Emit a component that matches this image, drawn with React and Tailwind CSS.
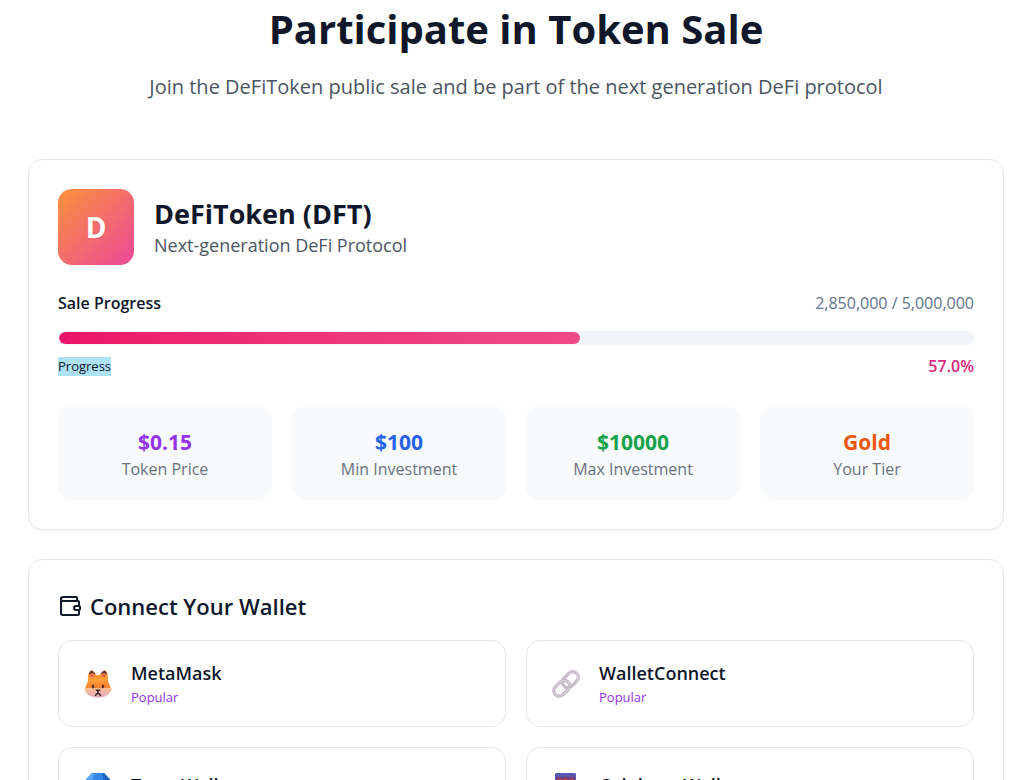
import { Wallet } from "lucide-react";

const stats = [
  { value: "$0.15", label: "Token Price", color: "text-[#9333ea]" },
  { value: "$100", label: "Min Investment", color: "text-[#2563eb]" },
  { value: "$10000", label: "Max Investment", color: "text-[#16a34a]" },
  { value: "Gold", label: "Your Tier", color: "text-[#ea580c]" },
];

const FoxIcon = () => (
  <svg viewBox="0 0 28 28" className="size-7" aria-hidden="true">
    <defs>
      <linearGradient id="fox" x1="0" y1="0" x2="0" y2="1">
        <stop offset="0" stopColor="#f98a35" />
        <stop offset=".5" stopColor="#ffa036" />
        <stop offset="1" stopColor="#f5792b" />
      </linearGradient>
      <linearGradient id="foxCheek" x1="0" y1="0" x2="0" y2="1">
        <stop offset="0" stopColor="#ffc08c" />
        <stop offset="1" stopColor="#dfa9c4" />
      </linearGradient>
    </defs>
    <path d="M4 11C3.500 5 5 1 7.500.5c2 0 3.500 2.500 4.500 4.500h4c1-2 2.500-4.500 4.500-4.500C23 1 24.500 5 24 11l3 7.500H1z" fill="url(#fox)" />
    <path d="M5 4.500C5.500 1.500 6.500.4 7.500.4 9 .6 10.500 2.400 11.500 4.500L8.500 3zM23 4.500C22.500 1.500 21.500.4 20.500.4 19 .6 17.500 2.400 16.500 4.500l3-1.500z" fill="#5b3b3d" />
    <path d="M6.500 7.500c0-2 .7-4 1.500-4s2 1.500 2.500 3zM21.500 7.500c0-2-.7-4-1.500-4s-2 1.500-2.500 3z" fill="#e8604c" />
    <path d="M.3 18c3-.5 8 0 11 1l2.700-1.500 2.700 1.500c3-1 8-1.500 11-1-1 6-6 9.700-13.700 9.700S1.300 24 .3 18z" fill="url(#foxCheek)" />
    <ellipse cx="9" cy="16.500" rx="1.200" ry="1.900" fill="#5a3028" />
    <ellipse cx="19" cy="16.500" rx="1.200" ry="1.900" fill="#5a3028" />
    <path d="M11 19.500h6L14 22.300z" fill="#33272e" />
    <path d="M14 21v2.500M11.300 26c.5-1.700 1.600-2.500 2.700-2.500s2.200.8 2.700 2.500" fill="none" stroke="#33272e" strokeWidth="1.300" />
  </svg>
);

const LinkIcon = () => (
  <svg viewBox="0 0 28 28" className="size-7" aria-hidden="true">
    <g fill="none" strokeWidth="3.300">
      <rect x="-9" y="-5.500" width="18" height="11" rx="5.500" stroke="#c9bccb" transform="translate(18.300 9.700) rotate(-45)" />
      <rect x="-9" y="-5.500" width="18" height="11" rx="5.500" stroke="#c3b5c6" transform="translate(9.700 18.300) rotate(-45)" />
      <rect x="-9" y="-5.500" width="18" height="11" rx="5.500" stroke="#dad0dc" strokeWidth="1.200" transform="translate(9.700 18.300) rotate(-45)" />
      <path d="M17 5l3-2.500M24 3.500c2 1.500 2.500 4 1 6.500" stroke="#ded5e0" strokeWidth="1.100" />
    </g>
  </svg>
);

const GemIcon = () => (
  <svg viewBox="0 0 28 28" className="size-7" aria-hidden="true">
    <path d="M8 2h12l7 7.500L14 27 1 9.500z" fill="#2f7de1" />
    <path d="M8 2h3L9.500 9.500H1z" fill="#5aa5f2" />
    <path d="M10 2h8l1.500 7.500h-11z" fill="#3486e8" />
    <path d="M18 2h2l7 7.500h-7.500z" fill="#1c67c9" />
  </svg>
);

const BankIcon = () => (
  <svg viewBox="0 0 28 28" className="size-7" aria-hidden="true">
    <path d="M3 3.500C3 2.500 3.500 2 4.500 2h18c1 0 1.500.5 1.500 1.500V27H3z" fill="#5a58b4" />
    <path d="M4 6h19v20H4z" fill="#6b3a78" />
    <path d="M5.500 7h4v4h-4zM11.500 7h4v4h-4zM17.500 7h4v4h-4z" fill="#a8425c" />
  </svg>
);

const wallets = [
  { name: "MetaMask", icon: FoxIcon, popular: true },
  { name: "WalletConnect", icon: LinkIcon, popular: true },
  { name: "Trust Wallet", icon: GemIcon },
  { name: "Coinbase Wallet", icon: BankIcon },
];

const App = () => {
  const sold = 2850000;
  const total = 5000000;
  const percent = (sold / total) * 100;

  return (
    <main className="min-h-screen bg-white px-7 pt-[3px] pb-7 font-['Open_Sans',sans-serif] text-slate-900">
      <header className="mb-14 text-center">
        <h1 className="text-[40px] leading-[52px] font-bold">Participate in Token Sale</h1>
        <p className="mt-4 text-xl leading-8 text-[#4b5563]">
          Join the DeFiToken public sale and be part of the next generation DeFi protocol
        </p>
      </header>

      <section className="mb-[29px] rounded-[14px] border border-slate-200 p-[29px] shadow-xs">
        <div className="mb-6.5 flex items-center gap-5">
          <div className="flex size-19 items-center justify-center rounded-[14px] bg-linear-to-br/srgb from-[#fb923c] to-[#ec4899] text-[28px] font-bold text-white">
            D
          </div>
          <div>
            <h2 className="text-[27px] leading-9 font-bold">DeFiToken (DFT)</h2>
            <p className="text-lg leading-[26px] text-[#4b5563]">Next-generation DeFi Protocol</p>
          </div>
        </div>

        <div className="mb-4 flex items-center justify-between text-base leading-6">
          <span className="font-semibold">Sale Progress</span>
          <span className="text-slate-500">
            {sold.toLocaleString("en-US")} / {total.toLocaleString("en-US")}
          </span>
        </div>
        <div className="h-3.5 overflow-hidden rounded-full border border-slate-100 bg-slate-100">
          <div
            className="h-full rounded-full bg-linear-to-r from-[#ec1268] to-[#f04a86]"
            style={{ width: `${percent}%` }}
          />
        </div>
        <div className="mt-3 mb-7.5 flex items-center justify-between leading-[19px]">
          <span className="bg-[#ade1f4] text-[13px]">Progress</span>
          <span className="text-base leading-[19px] font-semibold text-[#db2777]">{percent.toFixed(1)}%</span>
        </div>

        <div className="grid grid-cols-4 gap-5">
          {stats.map((stat) => (
            <div key={stat.label} className="rounded-[14px] bg-slate-50 p-5 text-center">
              <div className={`text-[21px] leading-8 font-bold ${stat.color}`}>{stat.value}</div>
              <div className="text-base leading-[22px] text-[#6b7280]">{stat.label}</div>
            </div>
          ))}
        </div>
      </section>

      <section className="rounded-[14px] border border-slate-200 p-[29px] shadow-xs">
        <h2 className="mb-[17px] flex items-center gap-2 text-[22px] leading-[34px] font-semibold">
          <Wallet className="size-6" />
          Connect Your Wallet
        </h2>
        <div className="grid grid-cols-2 gap-5">
          {wallets.map(({ name, icon: Icon, popular }) => (
            <button
              key={name}
              type="button"
              className="flex items-center gap-3.5 self-start rounded-[14px] border border-slate-200 px-5 py-[19px] text-left"
            >
              <span className="flex h-9 w-[38px] items-center justify-center">
                <Icon />
              </span>
              <span>
                <span className="block text-lg leading-[27px] font-semibold">{name}</span>
                {popular && <span className="block text-[13px] leading-5 text-[#9333ea]">Popular</span>}
              </span>
            </button>
          ))}
        </div>
      </section>
    </main>
  );
};

export default App;
